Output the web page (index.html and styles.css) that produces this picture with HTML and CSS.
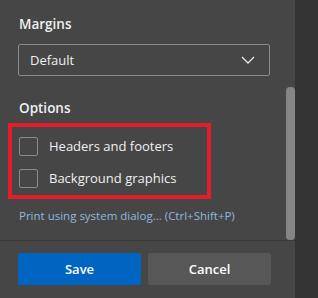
FILE: index.html
```html
<!DOCTYPE html>
<html lang="en">
<head>
    <meta charset="UTF-8">
    <meta name="viewport" content="width=device-width, initial-scale=1.0">
    <title>Print settings</title>
    <link rel="stylesheet" href="styles.css">
</head>
<body>
    <div class="screen">
        <div class="panel">
            <div class="scroll-area">
                <div class="content">
                    <h3 class="label">Margins</h3>
                    <div class="select">
                        <span>Default</span>
                        <svg class="chevron" width="14" height="8" viewBox="0 0 14 8">
                            <path d="M1 1 L7 7 L13 1" fill="none" stroke="#e6e6e6" stroke-width="1.3"/>
                        </svg>
                    </div>
                    <h3 class="label options-label">Options</h3>
                    <div class="options">
                        <label class="check-row"><span class="box"></span>Headers and footers</label>
                        <label class="check-row"><span class="box"></span>Background graphics</label>
                    </div>
                    <a class="system-link" href="#">Print using system dialog... (Ctrl+Shift+P)</a>
                </div>
                <div class="scrollbar"><div class="thumb"></div></div>
            </div>
            <div class="footer">
                <button class="btn btn-save">Save</button>
                <button class="btn btn-cancel">Cancel</button>
            </div>
        </div>
        <div class="side"></div>
    </div>
</body>
</html>
```

FILE: styles.css
```css
*{margin:0; padding:0; box-sizing:border-box;}
a{text-decoration: none;}
html,body{height: 100%;}
body{
    font-family: "Open Sans", "Noto Sans", sans-serif;
    color: #f0f0f0;
    background-color: #333;
}

.screen{
    display: flex;
    width: 318px; height: 298px;
}
.panel{
    width: 295px;
    display: flex;
    flex-direction: column;
    background-color: #464646;
}
.side{
    flex: 1;
    background-color: #333;
}
.scroll-area{
    display: flex;
    height: 241px;
    border-bottom: 1px solid #3a3a3a;
}
.content{
    flex: 1;
    padding: 14px 0 0 18px;
}
.scrollbar{
    width: 9px;
    padding-top: 87px;
}
.thumb{
    height: 153px;
    border-radius: 4px;
    background-color: #858585;
}

.label{
    font-size: 13.5px;
    font-weight: 600;
    line-height: 20px;
    padding-left: 1px;
}
.select{
    display: flex;
    justify-content: space-between;
    align-items: center;
    width: 252px; height: 32px;
    margin-top: 10px;
    padding: 0 14px 0 11px;
    border: 1px solid #8a8a8a;
    border-radius: 2px;
    font-size: 13px;
}
.options-label{
    margin-top: 22px;
}
.options{
    width: 203px;
    margin: 5px 0 0 -10px;
    padding: 3px 0 1px 7px;
    border: 4px solid #e31e2a;
}
.check-row{
    display: flex;
    align-items: center;
    gap: 11px;
    height: 32px;
    font-size: 13px;
}
.box{
    width: 19px; height: 19px;
    border: 1px solid #8a8a8a;
    border-radius: 2px;
}
.system-link{
    display: block;
    margin-top: 9px;
    padding-left: 1px;
    font-size: 11.5px;
    line-height: 16px;
    color: #8fb8dc;
}

.footer{
    display: flex;
    gap: 7px;
    padding: 12px 0 0 18px;
}
.btn{
    width: 123px; height: 32px;
    border: none;
    border-radius: 2px;
    font-family: inherit;
    font-size: 13px;
    font-weight: 600;
    color: #fff;
}
.btn-save{
    background-color: #0065c1;
}
.btn-cancel{
    background-color: #575757;
}
```
